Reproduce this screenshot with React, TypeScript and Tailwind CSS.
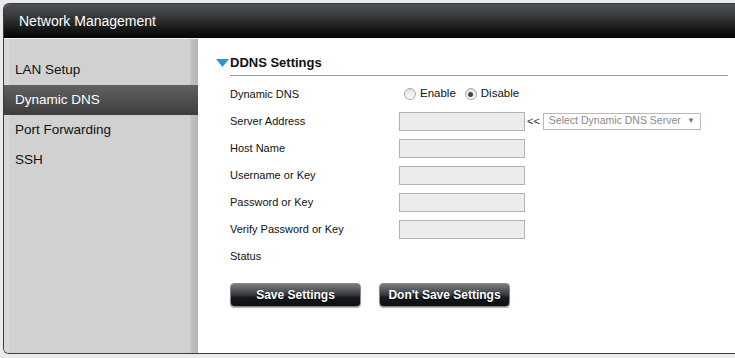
import React from "react";

const MENU = ["LAN Setup", "Dynamic DNS", "Port Forwarding", "SSH"];
const FIELDS = ["Host Name", "Username or Key", "Password or Key", "Verify Password or Key"];

function Radio({ checked }: { checked?: boolean }) {
  return (
    <span className="w-[12px] h-[12px] rounded-full border border-[#a8a8a8] bg-[linear-gradient(#e2e2e2,#fafafa)] flex items-center justify-center shrink-0">
      {checked && <span className="w-[5px] h-[5px] rounded-full bg-[#444]" />}
    </span>
  );
}

function TextBox() {
  return <div className="w-[126px] h-[19px] shrink-0 bg-[#ececec] border border-[#b2b2b2]" />;
}

function Row({ label, children }: { label: string; children?: React.ReactNode }) {
  return (
    <div className="h-[27px] flex items-center">
      <div className="w-[169px] shrink-0">{label}</div>
      {children}
    </div>
  );
}

function DarkButton({ children }: { children: React.ReactNode }) {
  return (
    <button className="w-[131px] h-[24px] rounded-[4px] border border-[#8a8a8a] bg-[linear-gradient(#787d82_0%,#50555a_30%,#33373b_50%,#181b1e_60%,#0c0d0f_100%)] text-white font-bold text-[12px] [text-shadow:0_1px_1px_#000] shadow-[0_1px_1px_rgba(0,0,0,0.3)]">
      {children}
    </button>
  );
}

export default function App() {
  return (
    <div className="w-[735px] h-[358px] bg-[#ebebeb] pt-[3px] pl-[3px] overflow-hidden font-['Liberation_Sans',Arial,sans-serif]">
      <div className="h-[351px] flex flex-col border-l border-t border-b border-[#3c3c3c] rounded-tl-[6px] rounded-bl-[6px] overflow-hidden bg-white">
        <div className="h-[34px] shrink-0 flex items-center pl-[15px] text-white text-[14px] bg-[linear-gradient(#4d5256_0%,#3b3e41_30%,#242526_58%,#141414_78%,#050508_100%)]">
          Network Management
        </div>
        <div className="flex-1 flex min-h-0 border-t border-[#f4f4f4]">
          <div className="w-[194px] shrink-0 flex bg-[#d1d1d1]">
            <div className="flex-1 pt-[16px] border-l-[5px] border-[#d9d9d9]">
              {MENU.map((m) => (
                <div
                  key={m}
                  className={
                    m === "Dynamic DNS"
                      ? "h-[30px] -ml-[5px] pl-[11px] -mr-[8px] relative flex items-center text-[13.5px] text-white bg-[linear-gradient(#616161,#3d3d3d)]"
                      : "h-[30px] pl-[6px] flex items-center text-[13.5px] text-[#111]"
                  }
                >
                  {m}
                </div>
              ))}
            </div>
            <div className="w-[8px] bg-[linear-gradient(to_right,#c4c4c4,#b4b4b4)]" />
          </div>
          <div className="flex-1 bg-white pl-[18px] pr-[7px] pt-[14px] text-[11px] text-[#111]">
            <div className="flex items-center">
              <svg width="13" height="8" viewBox="0 0 13 8" className="shrink-0">
                <polygon points="0,0 13,0 6.5,8" fill="#1b9be2" />
              </svg>
              <span className="ml-[1px] text-[13px] font-bold">DDNS Settings</span>
            </div>
            <div className="ml-[14px] mt-[2px] h-px bg-[#9c9c9c]" />
            <div className="ml-[14px] mt-[5px]">
              <Row label="Dynamic DNS">
                <div className="flex items-center ml-[5px]">
                  <Radio />
                  <span className="ml-[4px] text-[11.5px]">Enable</span>
                  <span className="ml-[9px]"><Radio checked /></span>
                  <span className="ml-[4px] text-[11.5px]">Disable</span>
                </div>
              </Row>
              <Row label="Server Address">
                <TextBox />
                <span className="ml-[2px] text-[11px] text-[#333] shrink-0">&lt;&lt;</span>
                <div className="ml-[3px] w-[158px] h-[17px] shrink-0 whitespace-nowrap border border-[#b8b8b8] bg-white flex items-center justify-between pl-[5px] pr-[5px] text-[#8a8a8a] text-[10.5px]">
                  <span>Select Dynamic DNS Server</span>
                  <span className="text-[8px] text-[#777]">▼</span>
                </div>
              </Row>
              {FIELDS.map((f) => (
                <Row key={f} label={f}>
                  <TextBox />
                </Row>
              ))}
              <Row label="Status" />
              <div className="mt-[13px] flex gap-[18px]">
                <DarkButton>Save Settings</DarkButton>
                <DarkButton>Don't Save Settings</DarkButton>
              </div>
            </div>
          </div>
        </div>
      </div>
    </div>
  );
}
